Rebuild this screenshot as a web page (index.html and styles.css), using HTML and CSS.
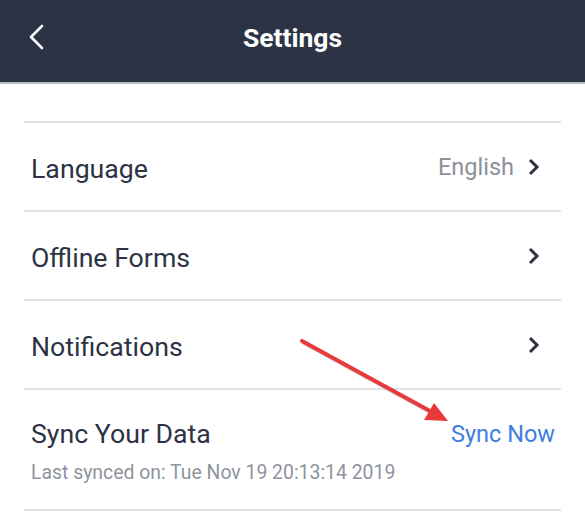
FILE: index.html
```html
<!DOCTYPE html>
<html>
<head>
<meta charset="utf-8">
<link rel="stylesheet" href="styles.css">
</head>
<body>
<div class="app">
  <header class="topbar">
    <span class="back">
      <svg width="20" height="26" viewBox="0 0 20 26"><path d="M15 2 L4 13 L15 24" fill="none" stroke="#fff" stroke-width="2.6" stroke-linecap="round" stroke-linejoin="round"/></svg>
    </span>
    <h1 class="title">Settings</h1>
  </header>
  <div class="list">
    <div class="row">
      <span class="label">Language</span>
      <span class="right"><span class="value">English</span><svg class="chev" width="14" height="20" viewBox="0 0 14 20"><path d="M3 3 L10 10 L3 17" fill="none" stroke="#2c3344" stroke-width="3"/></svg></span>
    </div>
    <div class="row">
      <span class="label">Offline Forms</span>
      <span class="right"><svg class="chev" width="14" height="20" viewBox="0 0 14 20"><path d="M3 3 L10 10 L3 17" fill="none" stroke="#2c3344" stroke-width="3"/></svg></span>
    </div>
    <div class="row">
      <span class="label">Notifications</span>
      <span class="right"><svg class="chev" width="14" height="20" viewBox="0 0 14 20"><path d="M3 3 L10 10 L3 17" fill="none" stroke="#2c3344" stroke-width="3"/></svg></span>
    </div>
    <div class="row sync">
      <div class="sync-top">
        <span class="label">Sync Your Data</span>
        <span class="link">Sync Now</span>
      </div>
      <div class="sub">Last synced on: Tue Nov 19 20:13:14 2019</div>
    </div>
  </div>
  <svg class="arrow" width="585" height="514" viewBox="0 0 585 514">
    <line x1="304" y1="343" x2="432" y2="413" stroke="#8a6a6a" stroke-opacity="0.35" stroke-width="4" stroke-linecap="round"/>
    <line x1="302" y1="341" x2="430" y2="411" stroke="#e8393b" stroke-width="4" stroke-linecap="round"/>
    <polygon points="448,421 424,420 434,403" fill="#e8393b"/>
  </svg>
</div>
</body>
</html>
```
FILE: styles.css
```css
html, body {
  margin: 0;
  padding: 0;
  background: #fff;
}
body {
  font-family: Roboto, "Noto Sans", sans-serif;
  color: #2c3344;
}
.app {
  position: relative;
  width: 585px;
  height: 514px;
  overflow: hidden;
}
.topbar {
  height: 82px;
  background: #2c3344;
  border-bottom: 2px solid #b9bdc6;
  display: flex;
  align-items: center;
  justify-content: center;
  position: relative;
}
.back {
  position: absolute;
  left: 27px;
  top: 24px;
  display: flex;
}
.title {
  margin: 0;
  color: #fff;
  font-size: 26.5px;
  font-weight: 700;
  margin-top: -8px;
}
.list {
  margin: 37px 24px 0 24px;
  border-top: 2px solid #e2e2e2;
}
.row {
  height: 87px;
  border-bottom: 2px solid #e2e2e2;
  display: flex;
  align-items: center;
  justify-content: space-between;
  padding: 0 20px 0 7px;
}
.label {
  font-size: 26.7px;
  color: #2c3344;
  margin-top: 4px;
}
.right {
  display: flex;
  align-items: center;
  gap: 13px;
}
.value {
  font-size: 23.5px;
  color: #8b909b;
}
.chev {
  display: block;
}
.row.sync {
  height: 119px;
  flex-direction: column;
  align-items: stretch;
  justify-content: flex-start;
  padding: 0 6px 0 7px;
}
.sync-top {
  display: flex;
  justify-content: space-between;
  align-items: center;
  margin-top: 28px;
}
.sync-top .label {
  margin-top: 0;
}
.link {
  font-size: 23.5px;
  color: #3f7de0;
}
.sub {
  margin-top: 11px;
  font-size: 19.4px;
  color: #8e939d;
}
.arrow {
  position: absolute;
  left: 0;
  top: 0;
  pointer-events: none;
}
```
